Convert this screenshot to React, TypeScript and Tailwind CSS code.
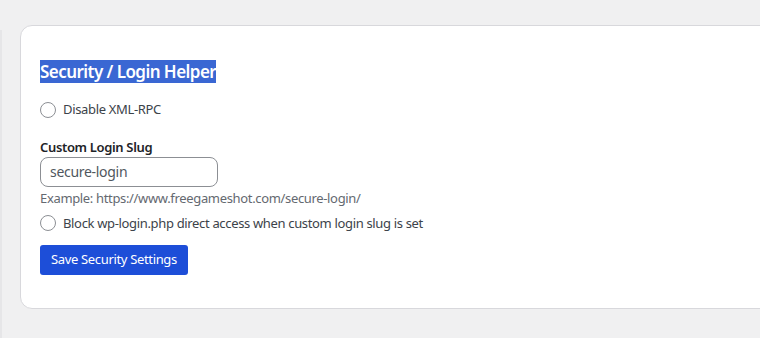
import React from 'react';

const Radio: React.FC<{ label: string }> = ({ label }) => (
  <label className="flex items-center gap-[7px] text-[13px] tracking-[-0.34px] text-[#3c434a]">
    <span className="w-4 h-4 rounded-full border border-[#8c8f94] bg-white shrink-0" />
    <span>{label}</span>
  </label>
);

const App: React.FC = () => {
  return (
    <div
      className="w-[760px] h-[338px] overflow-hidden bg-[#f0f0f1] flex"
      style={{ fontFamily: '"Noto Sans", "Liberation Sans", sans-serif' }}
    >
      {/* edge of the sidebar */}
      <div className="w-[2px] mt-[30px] bg-[#e6e6e8] shrink-0" />

      <div className="pl-[18px] pt-[25px]">
        <div className="w-[760px] h-[284px] bg-white border border-[#d8d8dc] rounded-[12px] pl-[19px] pt-[35px]">
          <h2 className="text-[17px] font-semibold leading-[21px] tracking-[-0.55px]">
            <span className="bg-[#3a67d3] text-white">Security / Login Helper</span>
          </h2>

          <div className="mt-[18px]">
            <Radio label="Disable XML-RPC" />
          </div>

          <div className="mt-[19px] text-[13px] font-semibold tracking-[-0.34px] text-[#1d2327] leading-[16px]">
            Custom Login Slug
          </div>
          <div className="mt-[2px] w-[178px] h-[30px] rounded-[8px] border border-[#8c8f94] flex items-center px-[9px] text-[14px] tracking-[-0.3px] text-[#50575e]">
            secure-login
          </div>
          <div className="mt-[2px] text-[13px] tracking-[-0.34px] text-[#646970] leading-[18px]">
            Example: https://www.freegameshot.com/secure-login/
          </div>

          <div className="mt-[7px]">
            <Radio label="Block wp-login.php direct access when custom login slug is set" />
          </div>

          <button className="mt-[12px] h-[30px] px-[11px] rounded-[3px] bg-[#1d4ed8] text-white text-[13px] tracking-[-0.34px]">
            Save Security Settings
          </button>
        </div>
      </div>
    </div>
  );
};

export default App;
